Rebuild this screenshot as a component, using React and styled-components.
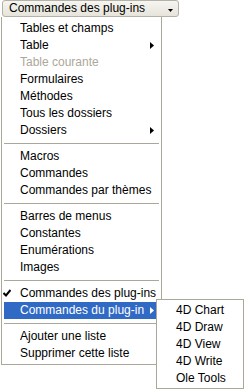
import React from "react";
import styled, { createGlobalStyle } from "styled-components";

const Global = createGlobalStyle`
  html, body { margin: 0; padding: 0; background: #fff; }
  body { font-family: "Liberation Sans", Arial, sans-serif; font-size: 12px; color: #000; }
`;

const Page = styled.div`
  position: relative;
  width: 244px;
  height: 390px;
  overflow: hidden;
  background: #fff;
`;

const Combo = styled.div`
  box-sizing: border-box;
  margin-left: 2px;
  width: 177px;
  height: 17px;
  border: 1px solid #b4b2a6;
  border-radius: 3px;
  background: linear-gradient(#f6f5f1, #e6e4da);
  display: flex;
  align-items: center;
  justify-content: space-between;
  padding: 0 5px 0 6px;
  line-height: 15px;
`;

const ComboArrow = styled.svg`
  width: 5px;
  height: 3px;
  margin-top: 4px;
`;

const Menu = styled.div`
  box-sizing: border-box;
  margin-left: 1px;
  width: 161px;
  border: 1px solid #aca899;
  border-top: none;
  padding: 3px 2px 2px;
  background: #fff;
  display: flex;
  flex-direction: column;
`;

const Item = styled.div`
  position: relative;
  height: 17px;
  line-height: 17px;
  padding-left: ${(p) => p.$indent || 16}px;
  padding-right: 5px;
  display: flex;
  align-items: center;
  justify-content: space-between;
  white-space: nowrap;
  color: ${(p) => (p.$active ? "#fff" : p.$disabled ? "#aca899" : "#000")};
  background: ${(p) => (p.$active ? "#316ac5" : "transparent")};
`;

const Separator = styled.div`
  height: 9px;
  display: flex;
  align-items: center;
  &::after {
    content: "";
    display: block;
    width: 100%;
    height: 1px;
    background: #aca899;
  }
`;

const Check = styled.svg`
  position: absolute;
  left: -1px;
  top: 4px;
  width: 8px;
  height: 8px;
`;

const SubArrow = styled.svg`
  width: 4px;
  height: 7px;
`;

const SubMenu = styled.div`
  position: absolute;
  left: 156px;
  top: 299px;
  box-sizing: border-box;
  width: 88px;
  border: 1px solid #aca899;
  padding: 2px 2px 1px;
  background: #fff;
  display: flex;
  flex-direction: column;
`;

const Arrow = ({ color }) => (
  <SubArrow viewBox="0 0 4 7">
    <path d="M0 0 L4 3.5 L0 7 Z" fill={color} />
  </SubArrow>
);

const sections = [
  [
    { t: "Tables et champs" },
    { t: "Table", sub: true },
    { t: "Table courante", disabled: true },
    { t: "Formulaires" },
    { t: "Méthodes" },
    { t: "Tous les dossiers" },
    { t: "Dossiers", sub: true },
  ],
  [{ t: "Macros" }, { t: "Commandes" }, { t: "Commandes par thèmes" }],
  [{ t: "Barres de menus" }, { t: "Constantes" }, { t: "Enumérations" }, { t: "Images" }],
  [
    { t: "Commandes des plug-ins", checked: true },
    { t: "Commandes du plug-in", sub: true, active: true },
  ],
  [{ t: "Ajouter une liste" }, { t: "Supprimer cette liste" }],
];

const subItems = ["4D Chart", "4D Draw", "4D View", "4D Write", "Ole Tools"];

export default function App() {
  return (
    <Page>
      <Global />
      <Combo>
        <span>Commandes des plug-ins</span>
        <ComboArrow viewBox="0 0 5 3">
          <path d="M0 0 H5 L2.5 3 Z" fill="#000" />
        </ComboArrow>
      </Combo>
      <Menu>
        {sections.map((sec, i) => (
          <React.Fragment key={i}>
            {i > 0 && <Separator />}
            {sec.map((it) => (
              <Item key={it.t} $active={it.active} $disabled={it.disabled}>
                {it.checked && (
                  <Check viewBox="0 0 8 8">
                    <path d="M0.5 4 L3 6.5 L7.5 1" stroke="#000" strokeWidth="2" fill="none" />
                  </Check>
                )}
                <span>{it.t}</span>
                {it.sub && <Arrow color={it.active ? "#fff" : "#000"} />}
              </Item>
            ))}
          </React.Fragment>
        ))}
      </Menu>
      <SubMenu>
        {subItems.map((s) => (
          <Item key={s} $indent={17}>
            <span>{s}</span>
          </Item>
        ))}
      </SubMenu>
    </Page>
  );
}
